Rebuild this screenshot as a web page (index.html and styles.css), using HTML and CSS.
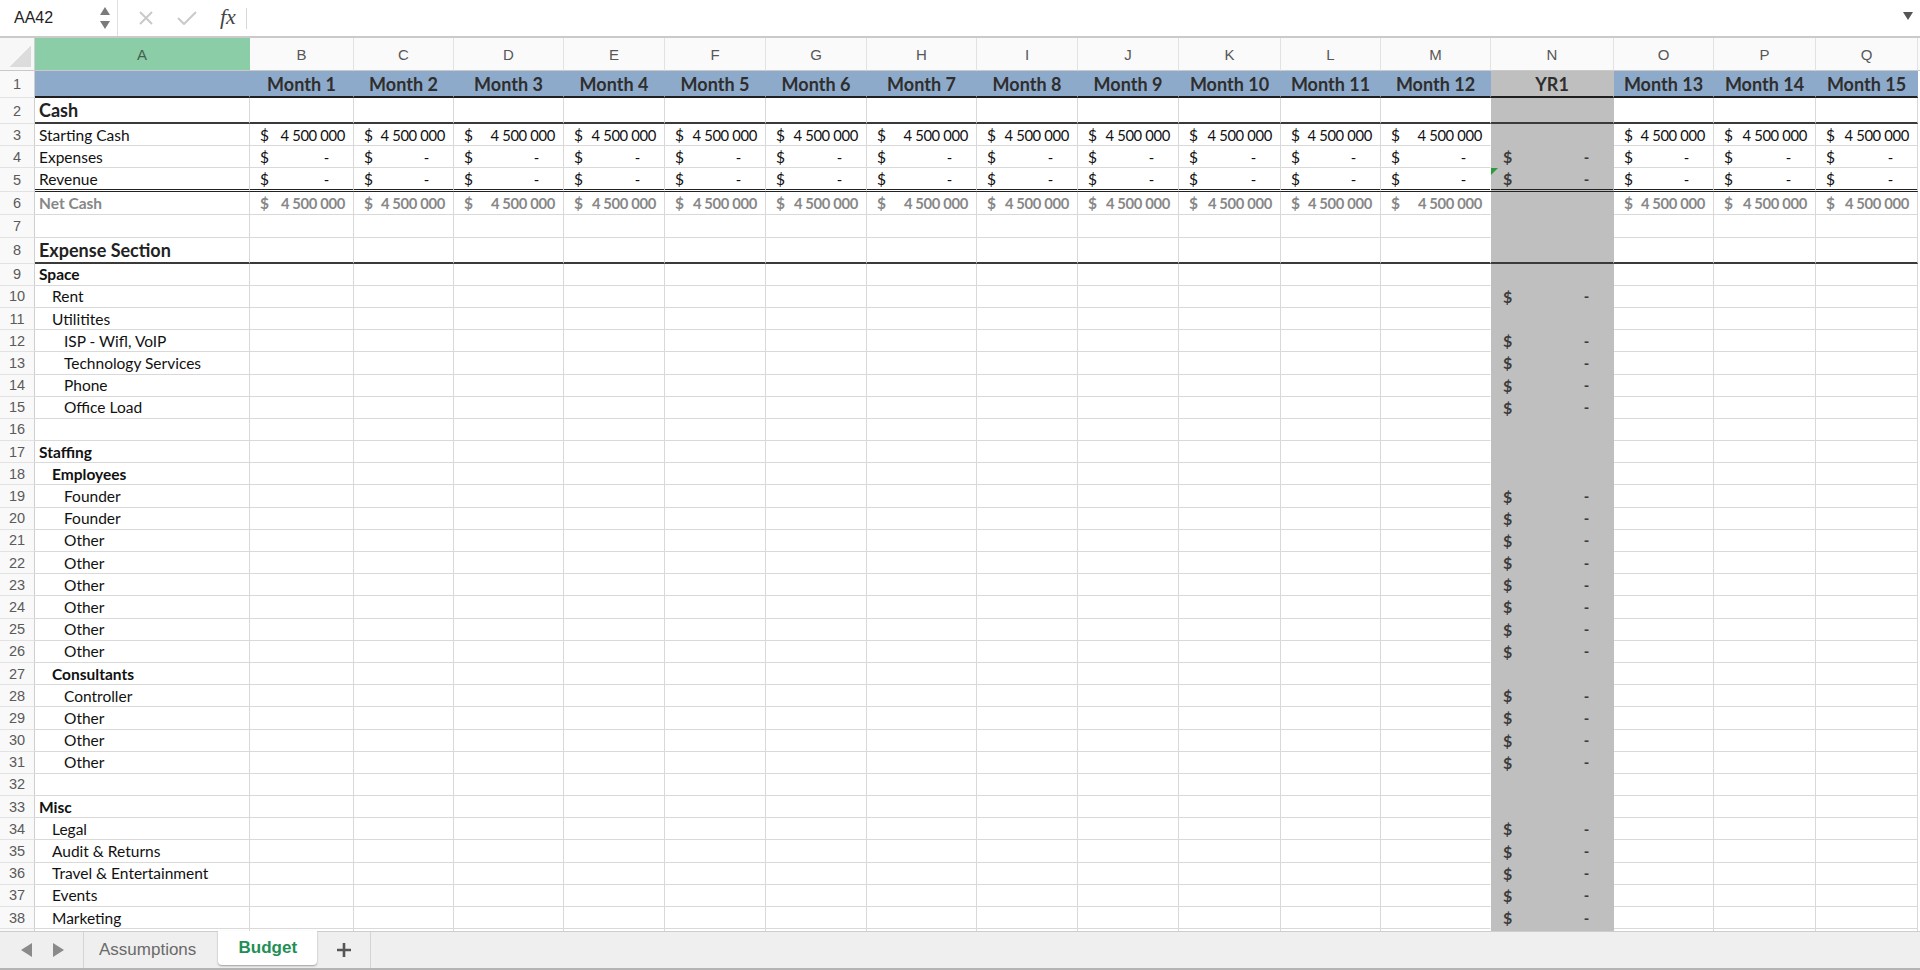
FILE: index.html
```html
<!DOCTYPE html>
<html lang="en">
<head>
  <meta charset="UTF-8">
  <meta name="viewport" content="width=device-width, initial-scale=1.0">
  <title>Budget</title>
  <link rel="stylesheet" href="styles.css">
</head>
<body>
  <div class="formula-bar">
    <div class="name-box">
      <span>AA42</span>
      <div class="spinner">
        <svg width="10" height="8" viewBox="0 0 10 8"><polygon points="5,0 10,8 0,8" fill="#7b7b7b"/></svg>
        <svg width="10" height="8" viewBox="0 0 10 8"><polygon points="0,0 10,0 5,8" fill="#7b7b7b"/></svg>
      </div>
    </div>
    <div class="edit-tools">
      <svg width="16" height="16" viewBox="0 0 16 16"><path d="M2 2 L14 14 M14 2 L2 14" stroke="#c9c9c9" stroke-width="2" fill="none"/></svg>
      <svg width="20" height="14" viewBox="0 0 20 14"><path d="M1 7 L7 13 L19 1" stroke="#c9c9c9" stroke-width="2" fill="none"/></svg>
      <span class="fx">fx</span>
      <div class="divider"></div>
    </div>
    <div class="formula-input"></div>
    <svg class="dropdown" width="10" height="8" viewBox="0 0 10 8"><polygon points="0,0 10,0 5,8" fill="#555"/></svg>
  </div>

  <div class="sheet" id="sheet"></div>

  <div class="tab-bar">
    <div class="tab-nav">
      <svg width="11" height="14" viewBox="0 0 11 14"><polygon points="11,0 11,14 0,7" fill="#8a8a8a"/></svg>
      <svg width="11" height="14" viewBox="0 0 11 14"><polygon points="0,0 11,7 0,14" fill="#8a8a8a"/></svg>
    </div>
    <div class="tab">Assumptions</div>
    <div class="tab active">Budget</div>
    <div class="tab-add">
      <svg width="14" height="14" viewBox="0 0 14 14"><path d="M7 0 V14 M0 7 H14" stroke="#555" stroke-width="2.6" fill="none"/></svg>
    </div>
  </div>

  <script>
    const letters = 'ABCDEFGHIJKLMNOPQ'.split('');
    const sheet = document.getElementById('sheet');

    // rows 2..39, row 1 (months) is built on its own
    const rows = [
      { n: 2, label: 'Cash', style: 'title', line: 'thick' },
      { n: 3, label: 'Starting Cash', fill: 'cash' },
      { n: 4, label: 'Expenses', fill: 'dash', total: true },
      { n: 5, label: 'Revenue', fill: 'dash', total: true, flag: true, line: 'double', h: 'h24' },
      { n: 6, label: 'Net Cash', style: 'net', fill: 'cash', h: 'h23' },
      { n: 7 },
      { n: 8, label: 'Expense Section', style: 'title', line: 'thick' },
      { n: 9, label: 'Space', style: 'strong' },
      { n: 10, label: 'Rent', indent: 1, total: true },
      { n: 11, label: 'Utilitites', indent: 1 },
      { n: 12, label: 'ISP - Wifl, VoIP', indent: 2, total: true },
      { n: 13, label: 'Technology Services', indent: 2, total: true },
      { n: 14, label: 'Phone', indent: 2, total: true },
      { n: 15, label: 'Office Load', indent: 2, total: true },
      { n: 16 },
      { n: 17, label: 'Staffing', style: 'strong' },
      { n: 18, label: 'Employees', style: 'strong', indent: 1 },
      { n: 19, label: 'Founder', indent: 2, total: true },
      { n: 20, label: 'Founder', indent: 2, total: true },
      { n: 21, label: 'Other', indent: 2, total: true },
      { n: 22, label: 'Other', indent: 2, total: true },
      { n: 23, label: 'Other', indent: 2, total: true },
      { n: 24, label: 'Other', indent: 2, total: true },
      { n: 25, label: 'Other', indent: 2, total: true },
      { n: 26, label: 'Other', indent: 2, total: true },
      { n: 27, label: 'Consultants', style: 'strong', indent: 1 },
      { n: 28, label: 'Controller', indent: 2, total: true },
      { n: 29, label: 'Other', indent: 2, total: true },
      { n: 30, label: 'Other', indent: 2, total: true },
      { n: 31, label: 'Other', indent: 2, total: true },
      { n: 32 },
      { n: 33, label: 'Misc', style: 'strong' },
      { n: 34, label: 'Legal', indent: 1, total: true },
      { n: 35, label: 'Audit & Returns', indent: 1, total: true },
      { n: 36, label: 'Travel & Entertainment', indent: 1, total: true },
      { n: 37, label: 'Events', indent: 1, total: true },
      { n: 38, label: 'Marketing', indent: 1, total: true },
      { n: '' } // row 39, only a sliver shows above the tabs
    ];

    function el(cls, text) {
      const d = document.createElement('div');
      d.className = cls;
      if (text !== undefined) d.textContent = text;
      return d;
    }

    function money(cls, value) {
      const d = el(cls);
      const cur = document.createElement('span');
      cur.textContent = '$';
      const amt = document.createElement('span');
      amt.className = 'amt';
      amt.textContent = value;
      d.append(cur, amt);
      return d;
    }

    // column letters
    const head = el('row letters');
    head.appendChild(el('cell corner'));
    letters.forEach(l => head.appendChild(el('cell letter' + (l === 'A' ? ' selected' : ''), l)));
    head.appendChild(el('cell letter tail'));
    sheet.appendChild(head);

    // row 1 - months
    const months = el('row months');
    months.appendChild(el('cell rh', '1'));
    let m = 1;
    letters.forEach(l => {
      if (l === 'A') months.appendChild(el('cell col'));
      else if (l === 'N') months.appendChild(el('cell col yr month', 'YR1'));
      else months.appendChild(el('cell col month' + (l === 'M' ? ' pre-yr' : ''), 'Month ' + m++));
    });
    months.appendChild(el('cell tail'));
    sheet.appendChild(months);

    rows.forEach(r => {
      const row = el(['row', r.line || '', r.style === 'title' ? 'tall' : '', r.h || ''].join(' '));
      row.appendChild(el('cell rh', String(r.n)));
      const labelCls = ['cell col label', r.style || '', r.indent ? 'indent-' + r.indent : ''].join(' ');
      row.appendChild(el(labelCls, r.label || ''));

      letters.slice(1).forEach(l => {
        let cls = 'cell col';
        if (l === 'M') cls += ' pre-yr';
        if (l === 'N') {
          cls += ' yr';
          if (r.total) {
            row.appendChild(money(cls + ' acct dash' + (r.flag ? ' flag' : ''), '-'));
          } else {
            row.appendChild(el(cls));
          }
          return;
        }
        if (r.fill === 'cash') row.appendChild(money(cls + ' acct' + (r.style === 'net' ? ' net' : ''), '4 500 000'));
        else if (r.fill === 'dash') row.appendChild(money(cls + ' acct dash', '-'));
        else row.appendChild(el(cls));
      });
      row.appendChild(el('cell tail'));
      sheet.appendChild(row);
    });
  </script>
</body>
</html>
```

FILE: styles.css
```css
body {
  margin: 0;
  height: 970px;
  display: flex;
  flex-direction: column;
  overflow: hidden;
  background-color: #ffffff;
  font-family: "Liberation Sans", Arial, sans-serif;
  color: #222;
}

/* formula bar */
.formula-bar {
  height: 36px;
  flex-shrink: 0;
  display: flex;
  align-items: stretch;
  border-bottom: 2px solid #cacaca;
}

.name-box {
  width: 118px;
  box-sizing: border-box;
  display: flex;
  align-items: center;
  justify-content: space-between;
  padding: 0 7px 0 14px;
  border-right: 1px solid #e0e0e0;
  font-size: 16px;
  color: #1f1f1f;
}

.spinner {
  display: flex;
  flex-direction: column;
  gap: 6px;
}

.spinner svg {
  display: block;
}

.edit-tools {
  display: flex;
  align-items: center;
  gap: 23px;
  padding-left: 20px;
}

.fx {
  font-family: "Liberation Serif", "Times New Roman", serif;
  font-style: italic;
  font-size: 22px;
  color: #444;
  margin-top: -3px;
}

.divider {
  width: 1px;
  height: 21px;
  background-color: #d6d6d6;
  margin-left: -13px;
}

.formula-input {
  flex: 1;
}

.dropdown {
  align-self: center;
  margin: -4px 7px 0 0;
}

/* grid */
.sheet {
  flex: 1;
  overflow: hidden;
  font-family: Lato, "Open Sans", sans-serif;
  font-size: 15.5px;
  color: #111;
}

.row {
  display: grid;
  grid-template-columns: 35px 215px 104px 100px 110px 101px 101px 101px 110px 101px 101px 102px 100px 110px 123px 100px 102px 102px 1fr;
  height: 22.2px;
}

.row.tall {
  height: 26px;
}

.row.h24 {
  height: 24px;
}

.row.h23 {
  height: 23px;
}

.cell {
  box-sizing: border-box;
  min-width: 0;
  display: flex;
  align-items: center;
  white-space: nowrap;
  overflow: hidden;
  position: relative;
  border-right: 1px solid #d9d9d9;
  border-bottom: 1px solid #d9d9d9;
}

.cell.tail {
  border: none;
}

.letters {
  height: 33px;
}

.letter {
  justify-content: center;
  background-color: #fafafa;
  border-right-color: #e2e2e2;
  border-bottom-color: #c9c9c9;
  font-family: "Liberation Sans", Arial, sans-serif;
  font-size: 15px;
  color: #575757;
}

.letter.selected {
  background-color: #8bcda7;
  border-right-color: #8bcda7;
  color: #45604f;
}

.letter.tail {
  border-bottom: 1px solid #c9c9c9;
}

.corner {
  background: linear-gradient(135deg, transparent 50%, #dcdcdc 50%) no-repeat right 3px bottom 3px / 21px 21px, #f7f7f7;
  border-right-color: #cfcfcf;
  border-bottom-color: #c9c9c9;
}

.rh {
  justify-content: center;
  background-color: #f9f9f9;
  border-right-color: #cfcfcf;
  border-bottom-color: #e2e2e2;
  font-family: "Liberation Sans", Arial, sans-serif;
  font-size: 14.5px;
  color: #5a5a5a;
}

.label {
  padding-left: 4px;
}

.indent-1 {
  padding-left: 17px;
}

.indent-2 {
  padding-left: 29px;
}

.strong {
  font-weight: 700;
}

.title {
  font-weight: 700;
  font-size: 18px;
  color: #222;
}

.net {
  font-weight: 700;
  color: #878787;
}

/* money cells */
.acct {
  justify-content: space-between;
  padding: 0 8px 0 10px;
}

.amt {
  font-size: 14.8px;
  letter-spacing: -0.35px;
}

.acct.dash {
  padding-right: 24px;
}

.yr {
  background-color: #bfbfbf;
  border-right-color: #bfbfbf;
  border-bottom-color: #bfbfbf;
}

.yr.acct {
  padding-left: 12px;
  font-weight: 700;
  font-size: 16px;
  color: #3c3c3c;
}

.row .pre-yr {
  border-right-color: transparent;
}

.flag::before {
  content: "";
  position: absolute;
  top: 0;
  left: 0;
  border-top: 7px solid #2f9a3c;
  border-right: 7px solid transparent;
}

/* header row with months */
.months {
  height: 27px;
}

.months .col {
  background-color: #8eaaca;
  border-right-color: transparent;
  border-bottom: 2px solid #1f1f1f;
}

.month {
  justify-content: center;
  font-weight: 700;
  font-size: 18px;
  color: #2e2e2e;
}

.months .yr {
  background-color: #bfbfbf;
}

.row.thick .col {
  border-bottom: 2px solid #3a3a3a;
}

.row.double .col {
  border-bottom: 3px double #222;
}

/* sheet tabs */
.tab-bar {
  height: 36px;
  flex-shrink: 0;
  display: flex;
  align-items: stretch;
  background-color: #efefef;
  border-top: 1px solid #cdcdcd;
  border-bottom: 2px solid #b4b4b4;
  font-size: 17px;
}

.tab-nav {
  width: 84px;
  box-sizing: border-box;
  display: flex;
  align-items: center;
  gap: 21px;
  padding-left: 21px;
  border-right: 1px solid #d4d4d4;
}

.tab {
  display: flex;
  align-items: center;
  padding: 0 22px 0 15px;
  color: #6a6a6a;
}

.tab.active {
  width: 99px;
  box-sizing: border-box;
  justify-content: center;
  padding: 0;
  margin: -1px 0 3px;
  background-color: #ffffff;
  border-radius: 0 0 4px 4px;
  box-shadow: 0 1px 2px rgba(0, 0, 0, 0.35);
  color: #1f8f55;
  font-weight: bold;
}

.tab-add {
  width: 53px;
  display: flex;
  align-items: center;
  justify-content: center;
  border-right: 1px solid #d4d4d4;
}
```
